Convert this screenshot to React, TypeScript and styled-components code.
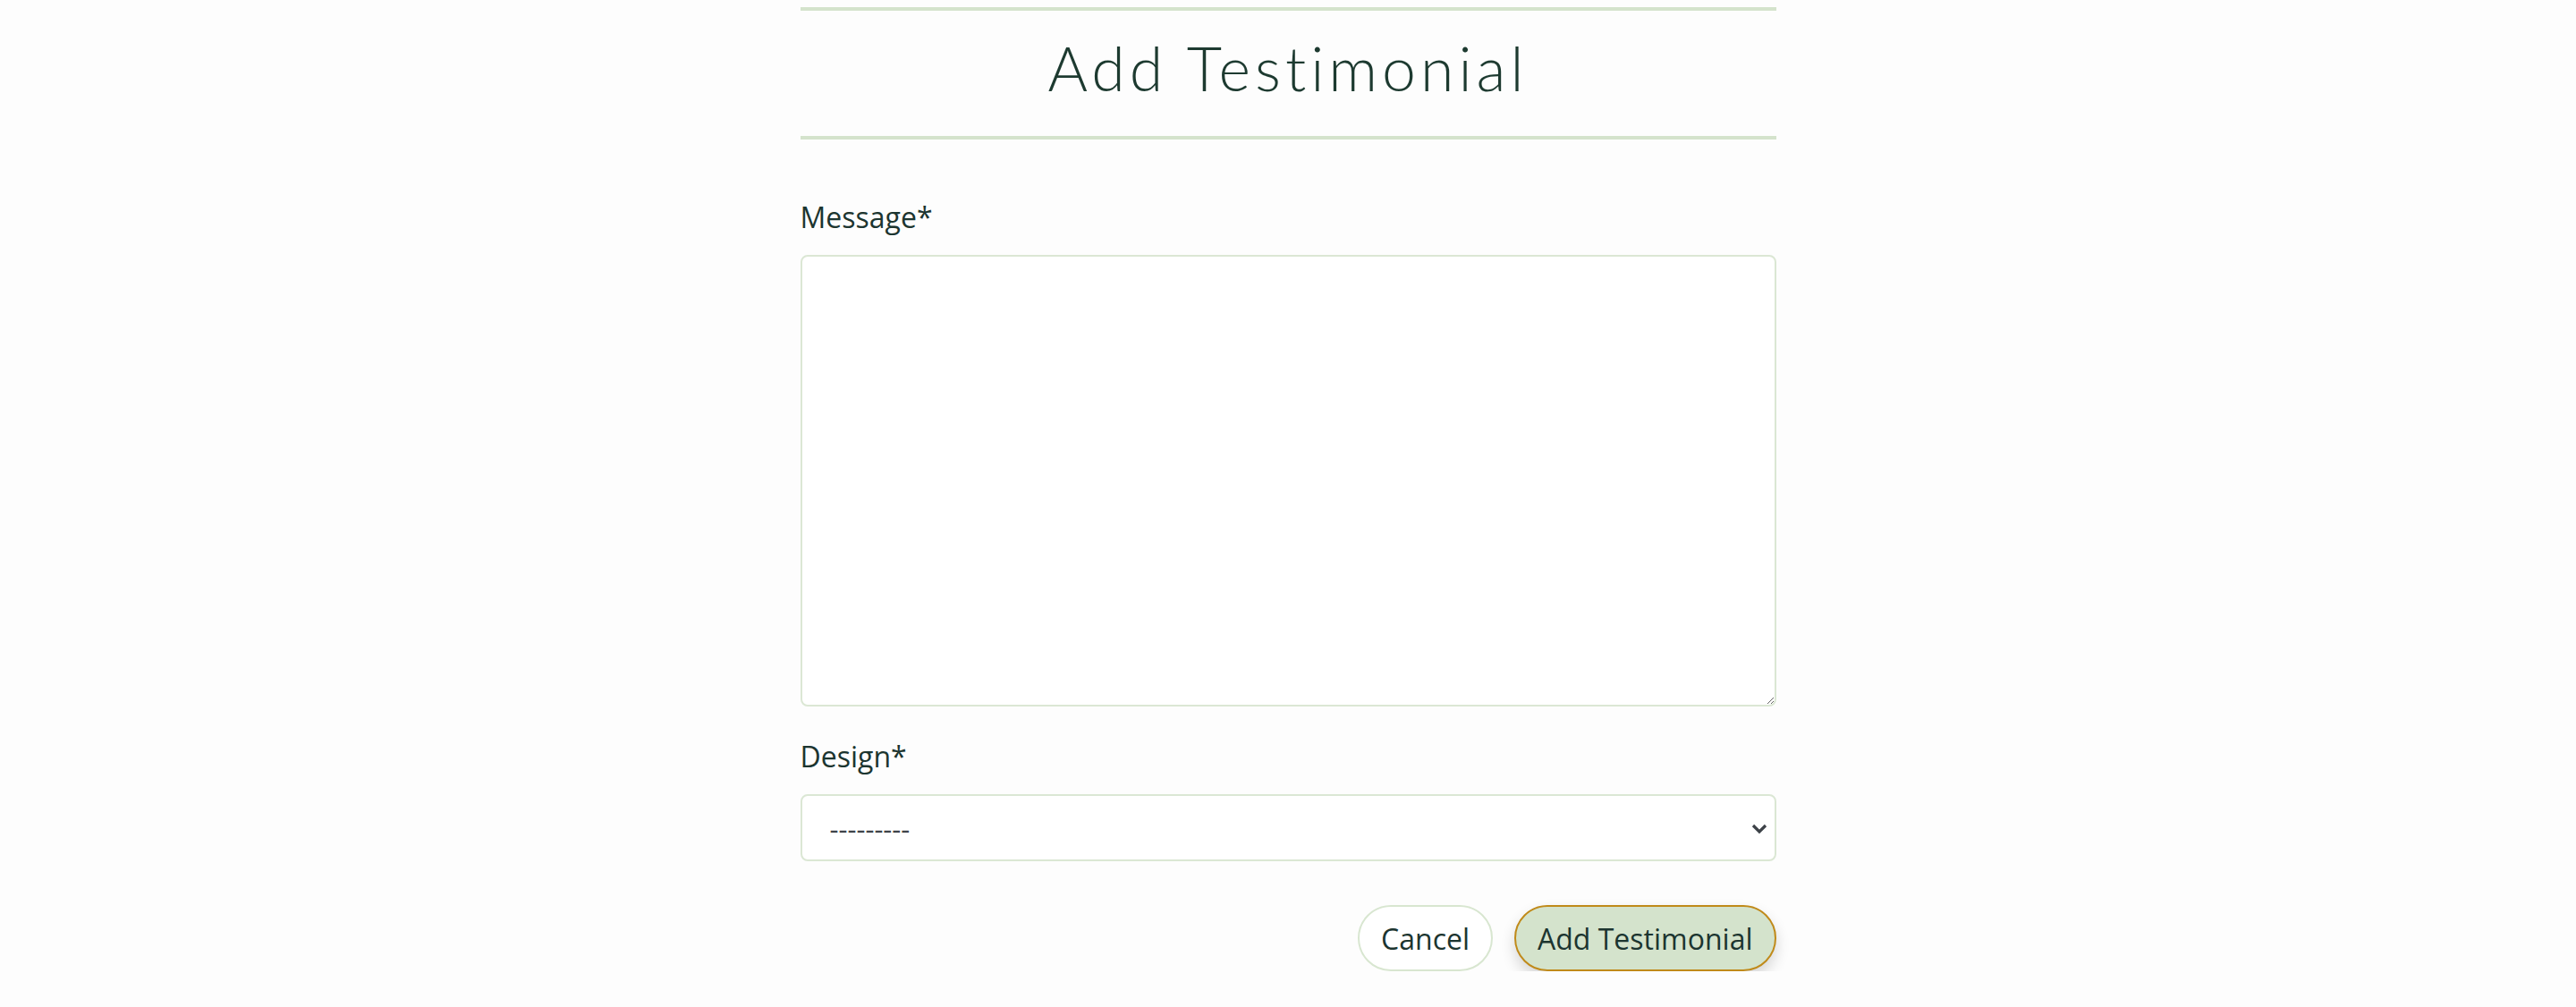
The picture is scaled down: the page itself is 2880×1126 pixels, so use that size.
import React from "react";
import styled, { createGlobalStyle } from "styled-components";

const Global = createGlobalStyle`
  html, body { margin: 0; padding: 0; background: #fdfdfd; }
  body { font-family: "Open Sans", "Noto Sans", sans-serif; color: #1c3530; }
  * { box-sizing: border-box; }
`;

const Page = styled.main`
  width: 1091px;
  margin: 0 auto;
  padding-top: 8px;
  display: flex;
  flex-direction: column;
`;

const Header = styled.header`
  border-top: 4px solid #d4e3cc;
  border-bottom: 4px solid #d4e3cc;
  padding-bottom: 12px;
  display: flex;
  justify-content: center;
`;

const Title = styled.h1`
  margin: 0;
  font-family: Lato, "Noto Sans", sans-serif;
  font-weight: 300;
  font-size: 68px;
  line-height: 128px;
  letter-spacing: 5px;
  color: #1d3a30;
`;

const Form = styled.form`
  display: flex;
  flex-direction: column;
  padding-top: 63px;
`;

const Field = styled.div<{ $gapAfter: number }>`
  display: flex;
  flex-direction: column;
  gap: 18px;
  margin-bottom: ${(p) => p.$gapAfter}px;
`;

const Label = styled.label`
  font-size: 32px;
  line-height: 48px;
  color: #1c3530;
`;

const TextArea = styled.textarea`
  width: 100%;
  height: 505px;
  border: 2px solid #dbe7d4;
  border-radius: 8px;
  background: #ffffff;
  font-family: "Open Sans", sans-serif;
  font-size: 32px;
  padding: 12px 30px;
  outline: none;
`;

const SelectWrap = styled.div`
  position: relative;
  width: 100%;
`;

const Select = styled.select`
  appearance: none;
  width: 100%;
  height: 75px;
  border: 2px solid #dbe7d4;
  border-radius: 8px;
  background: #ffffff;
  font-family: "Open Sans", sans-serif;
  font-size: 31px;
  color: #3d4248;
  padding: 0 60px 0 31px;
  outline: none;
`;

const Chevron = styled.svg`
  position: absolute;
  right: 10px;
  top: 50%;
  width: 18px;
  height: 12px;
  margin-top: -5px;
  pointer-events: none;
`;

const Actions = styled.div`
  display: flex;
  justify-content: flex-end;
  gap: 24px;
`;

const Button = styled.button<{ $primary?: boolean }>`
  height: 74px;
  padding: 0 24px;
  border-radius: 37px;
  font-family: "Open Sans", sans-serif;
  font-size: 32px;
  color: #1c3530;
  cursor: pointer;
  background: ${(p) => (p.$primary ? "#d4e3cc" : "#ffffff")};
  border: 2px solid ${(p) => (p.$primary ? "#c08a1a" : "#d8e6d0")};
  box-shadow: ${(p) => (p.$primary ? "0 8px 16px rgba(0,0,0,0.16)" : "none")};
`;

export default function App() {
  return (
    <>
      <Global />
      <Page>
        <Header>
          <Title>Add Testimonial</Title>
        </Header>
        <Form onSubmit={(e) => e.preventDefault()}>
          <Field $gapAfter={32}>
            <Label htmlFor="message">Message*</Label>
            <TextArea id="message" />
          </Field>
          <Field $gapAfter={49}>
            <Label htmlFor="design">Design*</Label>
            <SelectWrap>
              <Select id="design" defaultValue="">
                <option value="">---------</option>
              </Select>
              <Chevron viewBox="0 0 18 12">
                <path d="M2 2 L9 9 L16 2" fill="none" stroke="#3d4248" strokeWidth="3.2" />
              </Chevron>
            </SelectWrap>
          </Field>
          <Actions>
            <Button type="button">Cancel</Button>
            <Button type="submit" $primary>Add Testimonial</Button>
          </Actions>
        </Form>
      </Page>
    </>
  );
}
